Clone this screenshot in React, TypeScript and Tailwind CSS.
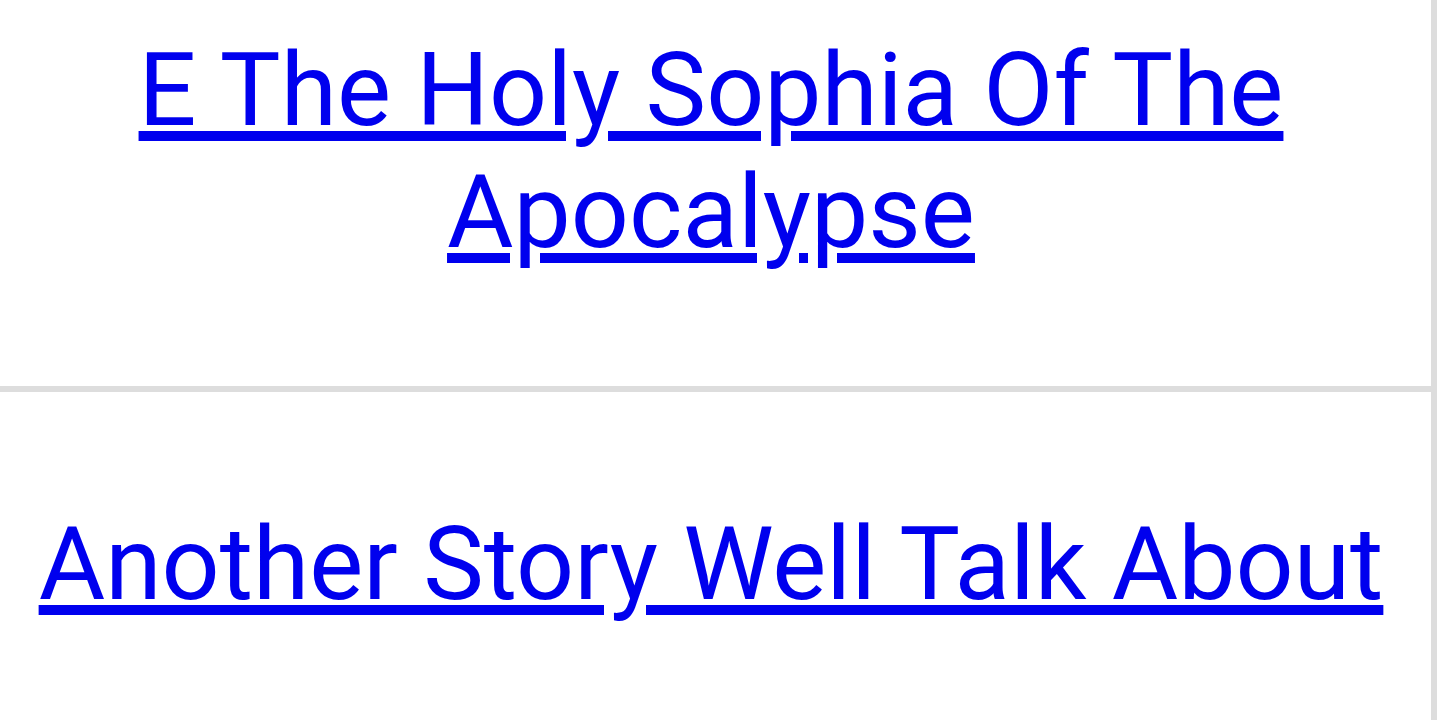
const stories = [
  { title: "E The Holy Sophia Of The Apocalypse", href: "#e-the-holy-sophia" },
  { title: "Another Story Well Talk About", href: "#another-story" },
];

export default function App() {
  return (
    <div className="h-[720px] overflow-hidden bg-white font-['Roboto',sans-serif]">
      <div className="-mt-[83px] w-[1437px] border-r-[6px] border-[#dddddd]">
        {stories.map((story, i) => (
          <div
            key={story.href}
            className={
              i > 0
                ? "border-t-[6px] border-[#dddddd] pl-2 pr-[17px] pt-[111px] pb-[113px] text-center"
                : "pl-2 pr-[17px] pt-[112px] pb-[113px] text-center"
            }
          >
            <a
              href={story.href}
              className="text-[102px] leading-[122px] text-[#0000ee] underline"
            >
              {story.title}
            </a>
          </div>
        ))}
      </div>
    </div>
  );
}
